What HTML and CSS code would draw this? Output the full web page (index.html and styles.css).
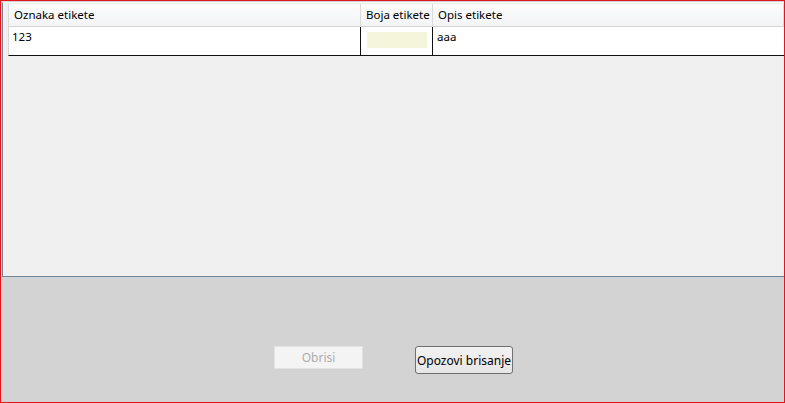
FILE: index.html
```html
<!DOCTYPE html>
<html>
<head>
<meta charset="utf-8">
<link rel="stylesheet" href="styles.css">
</head>
<body>
<div class="window">
  <div class="panel">
    <div class="grid">
      <div class="row header">
        <div class="cell c1">Oznaka etikete</div>
        <div class="cell c2">Boja etikete</div>
        <div class="cell c3">Opis etikete</div>
      </div>
      <div class="row data">
        <div class="cell c1">123</div>
        <div class="cell c2"><span class="swatch"></span></div>
        <div class="cell c3">aaa</div>
      </div>
    </div>
  </div>
  <div class="bottom">
    <button class="btn disabled" disabled>Obrisi</button>
    <button class="btn normal">Opozovi brisanje</button>
  </div>
</div>
</body>
</html>
```
FILE: styles.css
```css
html, body {
  margin: 0;
  padding: 0;
  width: 785px;
  height: 403px;
  overflow: hidden;
  font-family: "Noto Sans", "Open Sans", sans-serif;
  font-size: 11.5px;
  color: #000;
}
.window {
  box-sizing: border-box;
  width: 785px;
  height: 403px;
  border: 1px solid #e0161d;
  background: #d3d3d3;
  display: flex;
  flex-direction: column;
}
.panel {
  box-sizing: border-box;
  margin: 1px 0 0 1px;
  height: 275px;
  background: #f0f0f0;
  border-left: 1px solid #6e8597;
  border-bottom: 1px solid #6e8597;
  border-top: 1px solid #f6f6f6;
  padding: 1px 0 0 5px;
}
.grid {
  display: flex;
  flex-direction: column;
}
.row {
  display: flex;
}
.cell {
  white-space: nowrap;
  overflow: hidden;
}
.header {
  height: 22px;
  background: linear-gradient(#fcfcfd, #f3f4f6);
  border-bottom: 1px solid #d5d5d5;
  border-left: 1px solid #d8d8d8;
}
.header .cell {
  line-height: 22px;
  padding-left: 5px;
  border-right: 1px solid #dadada;
  box-sizing: border-box;
}
.header .c2 { padding-left: 5px; }
.data {
  height: 28px;
  background: #fff;
  border-bottom: 1px solid #111;
  border-left: 1px solid #d8d8d8;
}
.data .cell {
  box-sizing: border-box;
  padding-left: 3px;
  padding-top: 2px;
  line-height: 16px;
}
.c1 { width: 352px; flex: none; }
.c2 { width: 72px; flex: none; }
.c3 { flex: 1; }
.data .c1 { border-right: 1px solid #111; }
.data .c2 { border-right: 1px solid #111; padding-left: 6px; padding-top: 5px; }
.data .c3 { padding-left: 4px; }
.swatch {
  display: block;
  width: 60px;
  height: 16px;
  background: #f5f5dc;
}
.bottom {
  flex: 1;
  position: relative;
}
.btn {
  position: absolute;
  font-family: inherit;
  font-size: 12px;
  padding: 0;
  box-sizing: border-box;
}
.disabled {
  left: 273px;
  top: 69px;
  width: 89px;
  height: 23px;
  background: #f4f4f4;
  border: 1px solid #e2e2e2;
  color: #adadad;
  border-radius: 0;
}
.normal {
  left: 414px;
  top: 69px;
  width: 98px;
  height: 28px;
  background: linear-gradient(#f2f2f2, #e6e6e6);
  border: 1px solid #707070;
  border-radius: 3px;
  color: #000;
}
```
